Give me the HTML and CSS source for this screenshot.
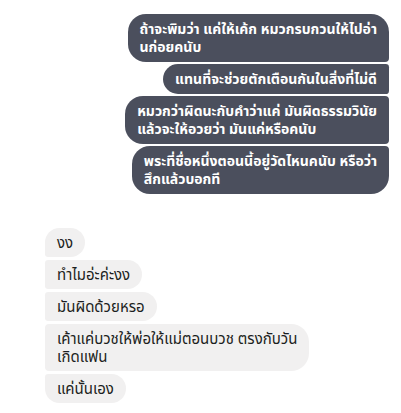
FILE: index.html
```html
<!DOCTYPE html>
<html>
<head>
  <title>Chat</title>
  <link rel="stylesheet" href="styles.css">
</head>
<body>

  <div class="thread">
    <div class="group mine">
      <div class="msg">ถ้าจะพิมว่า แค่ให้เค้ก หมวกรบกวนให้ไปอ่า<br>นก่อยคนับ</div>
      <div class="msg">แทนที่จะช่วยตักเตือนกันในสิ่งที่ไม่ดี</div>
      <div class="msg">หมวกว่าผิดนะกับคำว่าแค่ มันผิดธรรมวินัย<br>แล้วจะให้อวยว่า มันแค่หรือคนับ</div>
      <div class="msg">พระที่ชื่อหนึ่งตอนนี้อยู่วัดไหนคนับ หรือว่า<br>สึกแล้วบอกที</div>
    </div>

    <div class="group theirs">
      <div class="msg">งง</div>
      <div class="msg">ทำไมอ่ะค่ะงง</div>
      <div class="msg">มันผิดด้วยหรอ</div>
      <div class="msg">เค้าแค่บวชให้พ่อให้แม่ตอนบวช ตรงกับวัน<br>เกิดแฟน</div>
      <div class="msg">แค่นั้นเอง</div>
    </div>
  </div>

</body>
</html>
```

FILE: styles.css
```css
body {
  background-color: #fff;
  margin: 0;
  font-family: "Noto Sans", "Noto Sans Thai", "DejaVu Sans", sans-serif;
  font-size: 14px;
  line-height: 18px;
}

.thread {
  display: flex;
  flex-direction: column;
  padding: 14px 12px 0 45px;
}

.group {
  display: flex;
  flex-direction: column;
  gap: 2px;
}

.mine {
  align-items: flex-end;
}

.theirs {
  align-items: flex-start;
  gap: 3px;
  margin-top: 34px;
}

.msg {
  padding: 6px 12px;
  border-radius: 4px;
}

.mine .msg {
  background-color: #4b4f5d;
  color: #fff;
  font-weight: bold;
  border-radius: 18px 4px 4px 18px;
}

.mine .msg:first-child {
  border-top-right-radius: 18px;
}

.mine .msg:last-child {
  border-bottom-right-radius: 18px;
}

.theirs .msg {
  background-color: #f1f0f0;
  color: #1c1e21;
  font-size: 15px;
  padding: 5px 12px 6px;
  border-radius: 4px 18px 18px 4px;
}

.theirs .msg:first-child {
  border-top-left-radius: 18px;
}

.theirs .msg:last-child {
  border-bottom-left-radius: 18px;
}
```
